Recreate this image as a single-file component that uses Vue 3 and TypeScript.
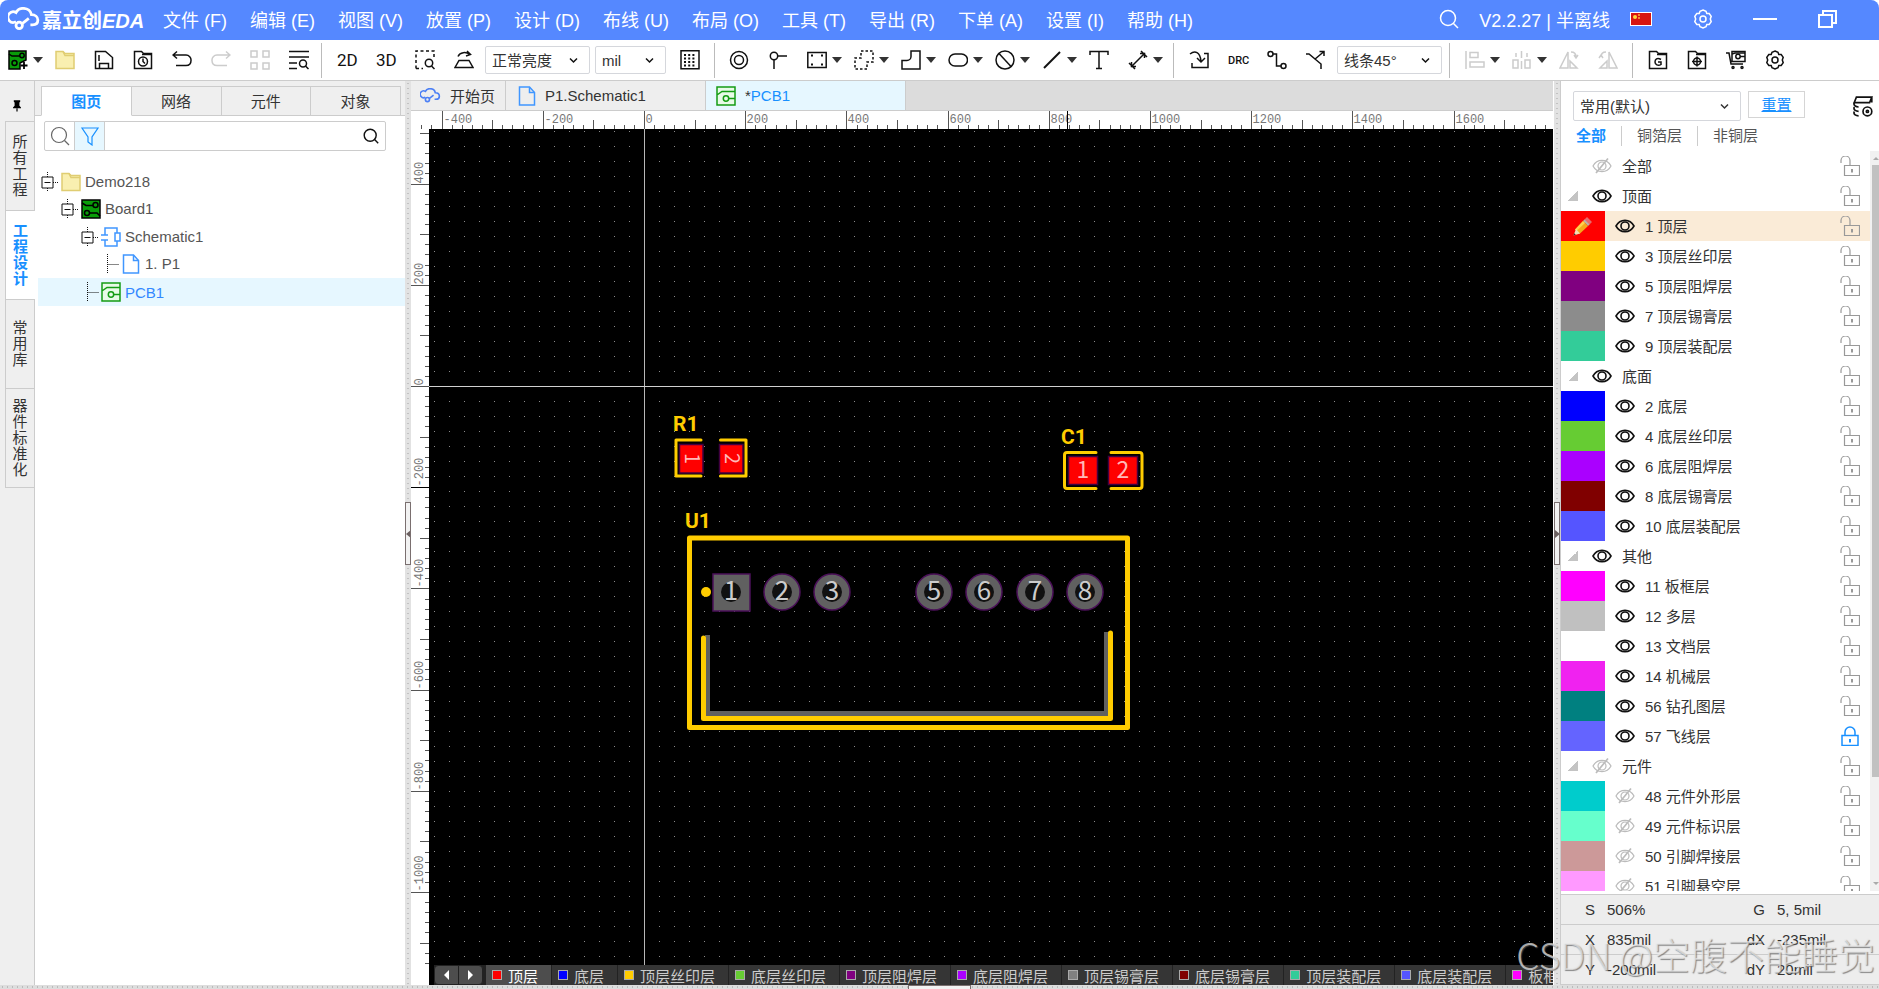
<script setup lang="ts">
import { computed, onBeforeUnmount, onMounted, ref } from 'vue'

interface Tool { icon?: string; label?: string; name: string; caret?: boolean; tight?: boolean; off?: boolean }
interface Row { kind: 'all' | 'group' | 'layer'; name: string; color?: string; hidden?: boolean; locked?: boolean; active?: boolean }

const icons: Record<string, string> = {
  cloud: '<path d="M7.5 13.5a5 5 0 1 1 0-8.600C9 2 11.500 1 14 1c4.500 0 7.500 2.500 8 6 3.500 0 6 2.200 6 5s-2 4.500-5 4.500h-2"/><circle cx="10.500" cy="17" r="3"/><path d="M13 15.500l6.500-5"/>',
  search: '<circle cx="9" cy="9" r="7.500"/><path d="M14.500 14.500l4.500 4.500"/>',
  gear: '<path d="M10 1l3 1.200.8 2.300 2.400.1 2 2.700-.9 2.700.9 2.700-2 2.700-2.400.1-.8 2.300L10 19l-3-1.200-.8-2.300-2.400-.1-2-2.700.9-2.700-.9-2.700 2-2.700 2.400-.1L7 2.200z"/><circle cx="10" cy="10" r="3"/>',
  restore: '<path d="M6 6V2h13v12h-4"/><path d="M2 6h13v12H2z"/>',
  chevron: '<path d="M2 3.500l3.500 3.500L9 3.500"/>',
  board: '<path fill="#099d09" stroke="#000" d="M1 1h17v9l-6 3v6H1z"/><g stroke="#000"><circle cx="14" cy="5.500" r="2.200"/><circle cx="6.500" cy="13" r="2.500"/><path d="M1 4l3 2h8M4 13"/></g><path stroke="#000" stroke-width="1.800" d="M16 12v7M12.500 15.500h7"/>',
  folder: '<path fill="#f9efb0" stroke="#e0cd72" d="M1 18.500V1.500h7l2 2h9v15z"/><path stroke="#e0cd72" d="M8 1.500l2 4h9"/>',
  save: '<path d="M1.500 18.500v-17h10l7 6v11z"/><path d="M5 5v6M5.500 18v-4.500h9V18"/>',
  history: '<path d="M1.500 18.500v-17h7l2 2h8v15z"/><path d="M9 4.500h9.500"/><circle cx="10" cy="11.500" r="4.500"/><path d="M10 8.500v3l2 2"/>',
  undo: '<path d="M5 1.500L1 5l4 3.500M1 5h13a5 5 0 0 1 5 5.500c0 3-2 5-5 5H4"/>',
  redo: '<path d="M15 1.500L19 5l-4 3.500M19 5H6a5 5 0 0 0-5 5.500c0 3 2 5 5 5h10"/>',
  tiles: '<path d="M1 1h6v6H1zM13 1h6v6h-6zM1 13h6v6H1zM13 13h6v6h-6z"/>',
  listfind: '<path d="M0 1.500h20M0 7h20M0 13h8M0 18.500h8"/><circle cx="14" cy="13.500" r="3.500"/><path d="M16.500 16l3 3"/>',
  areafind: '<path stroke-dasharray="3 2.500" d="M1 18.500V1h18v7M1 18.500h7"/><circle cx="14" cy="13" r="3.700"/><path d="M16.500 16l3 3"/>',
  layer: '<path d="M1 17.500h18l-4-7H5z"/><path d="M4 6.500c2-4.500 8-5 12-2M13 1l3.500 3.500L12 6"/>',
  grid: '<path d="M1 .8h18v18H1z"/><path stroke-width="2" stroke-dasharray="2 2.200" d="M4 5h12.500M4 8.500h12.500M4 12h12.500M4 15.500h12.500"/>',
  target: '<circle cx="10" cy="10" r="8.500"/><circle cx="10" cy="10" r="4.500"/>',
  via: '<circle cx="6" cy="6" r="3.700"/><path d="M9.500 6H19M6 10v9"/>',
  region: '<path d="M.8 2.500h18.400v15H.8z"/><path stroke-width="2" d="M4 5.500h2M14 5.500h2M4 14.500h2M14 14.500h2"/>',
  dashed: '<path stroke-dasharray="2.500 2" d="M7 1h12v11h-6v7H1V8h6z"/>',
  poly: '<path d="M10 1h9v18H1V10.500h5a4 4 0 0 0 4-4z"/>',
  slot: '<rect x="1" y="4" width="18.500" height="12" rx="6"/>',
  forbid: '<circle cx="10" cy="10" r="9"/><path d="M4 3.500l12 13"/>',
  line: '<path stroke-width="2" d="M2 18L18 2"/>',
  text: '<path d="M1 5V1.500h18V5M10 1.500v17M7 18.500h6"/>',
  dim: '<path d="M3 17L17 3M1 13l6 6M13 1l6 6M3.500 12v4.500H8M12 3.500h4.500V8"/>',
  inbox: '<path d="M1 4c5-4 10-2 11 7M8 8l4 4 4-4M15 3.500h4v14H3V13"/>',
  net: '<circle cx="3.500" cy="4" r="2.500"/><circle cx="16.500" cy="16" r="2.500"/><path d="M6 4h3.500v12H14"/>',
  split: '<path d="M0 4h3l12 10v5M8.500 9.500L18 1.500M13.500 1.500H18V6"/>',
  align: '<path d="M1 1v18M5 2.500h8v5H5zM5 12h14v5H5z"/>',
  spread: '<path d="M1 10h5v8H1zM13 10h5v8h-5zM4 3v4M9.500 1v7M9.500 11v8M15 3v4"/>',
  flipl: '<path d="M9 2v16H1zM11 11l7 7h-7zM12 2c3 0 5 2 5 5M15 5l2 3 2-3"/>',
  flipr: '<path d="M11 2v16h8zM9 11l-7 7h7zM8 2C5 2 3 4 3 7M1 8l2-3 2 3"/>',
  gfold: '<path d="M1.500 18.500v-17h7l2 2h8v15z"/><path d="M9 4.500h9.500M13 9.500C9 7 7 9.500 7 12s3 4.500 6 2.500v-2.500h-3"/>',
  afold: '<path d="M1.500 18.500v-17h7l2 2h8v15z"/><path d="M9 4.500h9.500"/><circle cx="10" cy="11.500" r="3.500"/><path d="M10 6.500v10M5 11.500h10"/>',
  cart: '<path d="M0 3h3l2 11h12M6 1.500h13v10H6z"/><circle cx="12" cy="6.500" r="2.200"/><path d="M14 6.500h5M6 4l3-1h10"/><circle cx="7" cy="17.500" r="1"/><circle cx="16" cy="17.500" r="1"/>',
  pin: '<path fill="#000" stroke="none" d="M6 4h8v2l-1 1v4l2 2v1H5v-1l2-2V7L6 6z"/><path stroke="#000" d="M10 14v4"/>',
  filter: '<path d="M2 2h16l-6 9v8l-4-3v-5z"/>',
  page: '<path d="M2.500 1h10l5 5.500v12.500h-15z"/><path d="M12.500 1v5.500h5"/>',
  pcb: '<path fill="#e8fbe8" d="M1 1h18v18H1zM1 9l5-3.500h13"/><circle cx="10" cy="12.500" r="2.700"/><path d="M12.700 12.500H19"/>',
  bcard: '<path fill="#099d09" stroke="#000" d="M1 1h18v18H1z"/><g stroke="#000"><circle cx="14.500" cy="6" r="2.500"/><circle cx="6" cy="14" r="2.500"/><path d="M1 4l4 2.500h7M8.500 14H16l3 3"/></g>',
  schem: '<path d="M4 6V1h12v5M4 14v5h12v-5M0 8h7M0 13h7M4 6v2M4 13v2"/><path d="M14 6h5v8h-5z"/>',
  layers: '<path d="M4 1h14l-2 5H2zM2 6c-1 3 2 4 4 4M2 10c-1 3 2 4 4 4M2 14c-1 3 2 4 4 4M18 1v5"/><circle cx="14" cy="14" r="4"/><circle cx="14" cy="14" r="1"/>',
  eye: '<path d="M1 10c4-7.500 14-7.500 18 0-4 7.500-14 7.500-18 0z"/><circle cx="10" cy="10" r="4"/>',
  eyeoff: '<path d="M1 10c4-7.500 14-7.500 18 0-4 7.500-14 7.500-18 0z"/><circle cx="10" cy="10" r="4"/><path stroke-width="1.700" d="M4 17L16 2.500"/>',
  unlock: '<path d="M1 7V4.500a4.500 4.500 0 0 1 9 0V9M4.500 9.500h15v10h-15z"/><path stroke-width="2" d="M12 13v3.500"/>',
  lock: '<path d="M5 9V6a5 5 0 0 1 10 0v3M2 9.500h16v10H2z"/><path stroke-width="2" d="M10 13v3.500"/>',
  pencil: '<g stroke="none"><path fill="#e86a6a" d="M14 1l5 5-3 3-5-5z"/><path fill="#b9b2a8" d="M11.500 3.500l5 5-1.500 1.500-5-5z"/><path fill="#f5a81c" d="M10 5l5 5-8.500 8L2 13.500z"/><path fill="#ffd14d" d="M10 5l2 2-8.500 8L2 13.500z"/><path fill="#f3dcb4" d="M3 13l4 4.500L.5 19.500z"/><path fill="#333" d="M1.300 17.300l1.500 1.500-2.300.7z"/></g>',
}

const menus = ['文件 (F)', '编辑 (E)', '视图 (V)', '放置 (P)', '设计 (D)', '布线 (U)', '布局 (O)', '工具 (T)', '导出 (R)', '下单 (A)', '设置 (I)', '帮助 (H)']

const fileTools: Tool[] = [
  { icon: 'board', name: '新建', caret: true },
  { icon: 'folder', name: '打开' },
  { icon: 'save', name: '保存' },
  { icon: 'history', name: '历史' },
  { icon: 'undo', name: '撤销' },
  { icon: 'redo', name: '重做', off: true },
  { icon: 'tiles', name: '阵列', off: true },
  { icon: 'listfind', name: '查找' },
]
const viewTools: Tool[] = [
  { label: '2D', name: '2D' },
  { label: '3D', name: '3D' },
  { icon: 'areafind', name: '框选缩放' },
  { icon: 'layer', name: '翻转', tight: true },
]
const placeTools: Tool[] = [
  { icon: 'target', name: '焊盘' },
  { icon: 'via', name: '过孔' },
  { icon: 'region', name: '板框', caret: true },
  { icon: 'dashed', name: '铺铜', caret: true },
  { icon: 'poly', name: '填充', caret: true },
  { icon: 'slot', name: '挖槽', caret: true },
  { icon: 'forbid', name: '禁止区域', caret: true },
  { icon: 'line', name: '线条', caret: true },
  { icon: 'text', name: '文本' },
  { icon: 'dim', name: '尺寸', caret: true },
]
const routeTools: Tool[] = [
  { icon: 'inbox', name: '导入变更' },
  { label: 'DRC', name: 'DRC' },
  { icon: 'net', name: '布线' },
  { icon: 'split', name: '差分布线', tight: true },
]
const alignTools: Tool[] = [
  { icon: 'align', name: '对齐', caret: true, off: true },
  { icon: 'spread', name: '分布', caret: true, off: true },
  { icon: 'flipl', name: '左旋', off: true },
  { icon: 'flipr', name: '右旋', off: true },
]
const outTools: Tool[] = [
  { icon: 'gfold', name: 'Gerber' },
  { icon: 'afold', name: '坐标文件' },
  { icon: 'cart', name: '下单' },
  { icon: 'gear', name: '设置' },
]

const sideTabs = [
  { name: '所有工程', size: 'm' },
  { name: '工程设计', size: 'm', on: true },
  { name: '常用库', size: 'm' },
  { name: '器件标准化', size: 'l' },
]
const panelTabs = ['图页', '网络', '元件', '对象']
const keyword = ref('')

const tree = [
  { depth: 0, icon: 'folder', name: 'Demo218', box: true },
  { depth: 1, icon: 'bcard', name: 'Board1', box: true },
  { depth: 2, icon: 'schem', name: 'Schematic1', box: true, tone: 'blue' },
  { depth: 3, icon: 'page', name: '1. P1', box: false, tone: 'blue' },
  { depth: 2, icon: 'pcb', name: 'PCB1', box: false, tone: 'green', on: true },
]

const rows: Row[] = [
  { kind: 'all', name: '全部', hidden: true },
  { kind: 'group', name: '顶面' },
  { kind: 'layer', name: '1 顶层', color: '#ff0000', active: true },
  { kind: 'layer', name: '3 顶层丝印层', color: '#ffcc00' },
  { kind: 'layer', name: '5 顶层阻焊层', color: '#800080' },
  { kind: 'layer', name: '7 顶层锡膏层', color: '#8c8c8c' },
  { kind: 'layer', name: '9 顶层装配层', color: '#33cc99' },
  { kind: 'group', name: '底面' },
  { kind: 'layer', name: '2 底层', color: '#0000ff' },
  { kind: 'layer', name: '4 底层丝印层', color: '#66cc33' },
  { kind: 'layer', name: '6 底层阻焊层', color: '#aa00ff' },
  { kind: 'layer', name: '8 底层锡膏层', color: '#800000' },
  { kind: 'layer', name: '10 底层装配层', color: '#5555ff' },
  { kind: 'group', name: '其他' },
  { kind: 'layer', name: '11 板框层', color: '#ff00ff' },
  { kind: 'layer', name: '12 多层', color: '#c0c0c0' },
  { kind: 'layer', name: '13 文档层', color: '#ffffff' },
  { kind: 'layer', name: '14 机械层', color: '#f022f0' },
  { kind: 'layer', name: '56 钻孔图层', color: '#008080' },
  { kind: 'layer', name: '57 飞线层', color: '#6464ff', locked: true },
  { kind: 'group', name: '元件', hidden: true },
  { kind: 'layer', name: '48 元件外形层', color: '#00cccc', hidden: true },
  { kind: 'layer', name: '49 元件标识层', color: '#66ffcc', hidden: true },
  { kind: 'layer', name: '50 引脚焊接层', color: '#cc9999', hidden: true },
  { kind: 'layer', name: '51 引脚悬空层', color: '#ff99ff', hidden: true },
]

const bottomTabs = [
  { name: '顶层', color: '#ff0000', on: true },
  { name: '底层', color: '#0000ff' },
  { name: '顶层丝印层', color: '#ffcc00' },
  { name: '底层丝印层', color: '#66cc33' },
  { name: '顶层阻焊层', color: '#800080' },
  { name: '底层阻焊层', color: '#aa00ff' },
  { name: '顶层锡膏层', color: '#808080' },
  { name: '底层锡膏层', color: '#800000' },
  { name: '顶层装配层', color: '#33cc99' },
  { name: '底层装配层', color: '#5555ff' },
  { name: '板框层', color: '#ff00ff' },
]

const PX_PER_MIL = 0.506
const originX = 233
const originY = 257

// Rulers only carry the ticks that fit the visible canvas.
const center = ref<HTMLElement | null>(null)
const viewW = ref(0)
const viewH = ref(0)
let watcher: ResizeObserver | undefined
function measure() {
  if (!center.value) return
  viewW.value = center.value.clientWidth
  viewH.value = center.value.clientHeight - 48
}
onMounted(() => {
  measure()
  watcher = new ResizeObserver(measure)
  if (center.value) watcher.observe(center.value)
})
onBeforeUnmount(() => watcher?.disconnect())

interface Tick { pos: number; len: number; label?: string }
function ticks(origin: number, sign: number, size: number): Tick[] {
  const out: Tick[] = []
  for (let v = -4000; v <= 4000; v += 20) {
    const pos = Math.round(origin + sign * v * PX_PER_MIL) + 0.5
    if (pos < 2 || pos > size) continue
    const len = v % 200 === 0 ? 18 : v % 100 === 0 ? 9 : 4
    out.push({ pos, len, label: v % 200 === 0 ? String(v) : undefined })
  }
  return out
}
const xTicks = computed(() => ticks(originX, 1, viewW.value))
const yTicks = computed(() => ticks(originY, -1, viewH.value - 14))

const roundPads = [
  { x: 353, n: '2' }, { x: 403, n: '3' }, { x: 505, n: '5' },
  { x: 555, n: '6' }, { x: 606, n: '7' }, { x: 656, n: '8' },
]
</script>

<template>
  <div class="app">
    <header class="titlebar">
      <div class="brand">
        <svg class="cloud" viewBox="0 0 30 22" v-html="icons.cloud"></svg>
        <span>嘉立创<i>EDA</i></span>
      </div>
      <nav class="menus">
        <button v-for="m in menus" :key="m" type="button">{{ m }}</button>
      </nav>
      <div class="winbar">
        <button type="button" aria-label="搜索"><svg class="ic" viewBox="0 0 20 20" v-html="icons.search"></svg></button>
        <span class="version">V2.2.27 | 半离线</span>
        <svg class="flag" viewBox="0 0 22 14"><rect width="22" height="14" fill="#fff" /><rect x="1" y="1" width="20" height="12" fill="#d8160f" /><circle cx="5" cy="5" r="2" fill="#ffd83b" /><path d="M8 3h2M8 6h2" stroke="#ffb43b" /></svg>
        <button type="button" class="b-gear" aria-label="设置"><svg class="ic" viewBox="0 0 20 20" v-html="icons.gear"></svg></button>
        <button type="button" class="b-min" aria-label="最小化"><svg viewBox="0 0 24 20"><path d="M0 10h24" /></svg></button>
        <button type="button" class="b-max" aria-label="还原"><svg class="ic" viewBox="0 0 20 20" v-html="icons.restore"></svg></button>
      </div>
    </header>

    <div class="toolbar">
      <div class="group g-file">
        <button v-for="t in fileTools" :key="t.name" type="button" class="tool" :class="{ wide: t.caret, off: t.off }" :aria-label="t.name">
          <svg class="ic" viewBox="0 0 20 20" v-html="icons[t.icon!]"></svg><i v-if="t.caret" class="caret"></i>
        </button>
      </div>
      <div class="group g-view">
        <button v-for="t in viewTools" :key="t.name" type="button" class="tool" :class="{ tight: t.tight }" :aria-label="t.name">
          <b v-if="t.label" class="dim">{{ t.label }}</b><svg v-else class="ic" viewBox="0 0 20 20" v-html="icons[t.icon!]"></svg>
        </button>
        <span class="pick w-bright"><select aria-label="亮度"><option>正常亮度</option></select><svg viewBox="0 0 11 11" v-html="icons.chevron"></svg></span>
        <span class="pick w-unit"><select aria-label="单位"><option>mil</option></select><svg viewBox="0 0 11 11" v-html="icons.chevron"></svg></span>
        <button type="button" class="tool" aria-label="网格"><svg class="ic" viewBox="0 0 20 20" v-html="icons.grid"></svg></button>
      </div>
      <div class="group g-place">
        <button v-for="t in placeTools" :key="t.name" type="button" class="tool" :class="{ wide: t.caret }" :aria-label="t.name">
          <svg class="ic" viewBox="0 0 20 20" v-html="icons[t.icon!]"></svg><i v-if="t.caret" class="caret"></i>
        </button>
      </div>
      <div class="group g-route">
        <button v-for="t in routeTools" :key="t.name" type="button" class="tool" :class="{ tight: t.tight }" :aria-label="t.name">
          <b v-if="t.label" class="drc">{{ t.label }}</b><svg v-else class="ic" viewBox="0 0 20 20" v-html="icons[t.icon!]"></svg>
        </button>
        <span class="pick w-bright"><select aria-label="布线拐角"><option>线条45°</option></select><svg viewBox="0 0 11 11" v-html="icons.chevron"></svg></span>
      </div>
      <div class="group g-align">
        <button v-for="t in alignTools" :key="t.name" type="button" class="tool" :class="{ wide: t.caret, off: t.off }" :aria-label="t.name">
          <svg class="ic" viewBox="0 0 20 20" v-html="icons[t.icon!]"></svg><i v-if="t.caret" class="caret"></i>
        </button>
      </div>
      <div class="group g-out">
        <button v-for="t in outTools" :key="t.name" type="button" class="tool" :aria-label="t.name">
          <svg class="ic" viewBox="0 0 20 20" v-html="icons[t.icon!]"></svg>
        </button>
      </div>
    </div>

    <main class="work">
      <aside class="side">
        <button type="button" class="pin" aria-label="固定"><svg viewBox="0 0 20 20" v-html="icons.pin"></svg></button>
        <button v-for="s in sideTabs" :key="s.name" type="button" class="vtab" :class="[s.size, { on: s.on }]"><span>{{ s.name }}</span></button>
      </aside>

      <section class="panel">
        <div class="ptabs">
          <button v-for="(t, i) in panelTabs" :key="t" type="button" :class="{ on: i === 0 }">{{ t }}</button>
        </div>
        <div class="finder">
          <button type="button" aria-label="搜索范围"><svg class="ic" viewBox="0 0 20 20" v-html="icons.search"></svg></button>
          <button type="button" class="filter" aria-label="筛选"><svg class="ic" viewBox="0 0 20 20" v-html="icons.filter"></svg></button>
          <input v-model="keyword" type="text" aria-label="关键字" />
          <button type="button" class="go" aria-label="查找"><svg class="ic" viewBox="0 0 20 20" v-html="icons.search"></svg></button>
        </div>
        <ul class="tree">
          <li v-for="n in tree" :key="n.name" :class="['d' + n.depth, n.tone, { on: n.on }]">
            <svg v-if="n.box" class="knot" viewBox="0 0 18 20"><path class="dots" d="M6.500 0v20M12 10.500h6" /><path d="M1 5h11v11H1zM3.500 10.500h6" fill="#fff" /></svg>
            <svg v-else class="knot" viewBox="0 0 18 20"><path class="dots" d="M6.500 0v20M6.500 10.500H18" /></svg>
            <svg class="ic" viewBox="0 0 20 20" v-html="icons[n.icon]"></svg>
            <span>{{ n.name }}</span>
          </li>
        </ul>
      </section>

      <div class="split"><div class="grip"><svg viewBox="0 0 5 8"><path d="M5 0v8L0 4z" /></svg></div></div>

      <section ref="center" class="center">
        <div class="docs">
          <button type="button" class="doc home"><svg class="cloud" viewBox="0 0 30 22" v-html="icons.cloud"></svg>开始页</button>
          <button type="button" class="doc sch"><svg class="ic" viewBox="0 0 20 20" v-html="icons.page"></svg>P1.Schematic1</button>
          <button type="button" class="doc pcb on"><svg class="ic" viewBox="0 0 20 20" v-html="icons.pcb"></svg><span><em>*</em>PCB1</span></button>
        </div>
        <svg class="hruler">
          <g v-for="t in xTicks" :key="t.pos">
            <path :d="`M${t.pos} ${18 - t.len}V18`" />
            <text v-if="t.label" :x="t.pos + 1" y="12">{{ t.label }}</text>
          </g>
          <path class="cur" d="M656.500 0v18" />
        </svg>
        <div class="stage">
          <svg class="vruler">
            <g v-for="t in yTicks" :key="t.pos">
              <path :d="`M${18 - t.len} ${t.pos}H18`" />
              <text v-if="t.label" :transform="`translate(12 ${t.pos - 1}) rotate(-90)`">{{ t.label }}</text>
            </g>
            <path class="cur" d="M0 358.500h18" />
          </svg>
          <div class="board">
            <svg class="canvas">
              <defs>
                <pattern id="dots" x="5" y="2" width="15" height="15" patternUnits="userSpaceOnUse"><rect width="1" height="1" fill="#8a8a8a" /></pattern>
              </defs>
              <rect width="100%" height="100%" fill="#000" />
              <rect width="100%" height="100%" fill="url(#dots)" />
              <rect x="215" y="0" width="1" height="100%" fill="#b8b8b8" />
              <rect x="0" y="257" width="100%" height="1" fill="#d0d0d0" />

              <g class="silk" stroke-width="3">
                <path d="M272 311H247v36h25M291.500 311H317v36h-25.500" />
                <path d="M667 323.500h-29q-2.500 0-2.500 2.500v31q0 2.500 2.500 2.500H667M682 323.500h28.500q2.500 0 2.500 2.500v31q0 2.500-2.500 2.500H682" />
              </g>
              <g fill="#f00" stroke="#400040">
                <path d="M250.500 315.500h23.500v28.500h-23.500zM290.500 315.500h23.500v28.500h-23.500zM639.500 327.500h29v28h-29zM679.500 327.500h29v28h-29z" />
              </g>
              <g class="num pink">
                <text transform="translate(256 329.500) rotate(90)" font-size="20">1</text>
                <text transform="translate(296 329.500) rotate(90)" font-size="20">2</text>
                <text x="654" y="349" font-size="23">1</text>
                <text x="694" y="349" font-size="23">2</text>
              </g>
              <g class="ref">
                <text x="244" y="302">R1</text>
                <text x="632" y="315">C1</text>
                <text x="256" y="399">U1</text>
              </g>
              <path fill="none" stroke="#606060" stroke-width="5" d="M278.500 506v78.500h399V503" />
              <g class="silk" stroke-width="5">
                <path d="M260.500 409h438v189.500h-438z" />
                <path d="M274.500 509v80.500h407V504" />
              </g>
              <circle cx="277" cy="463" r="5" fill="#fc0" />
              <rect x="284" y="445" width="37" height="37" fill="#606060" stroke="#4b1059" />
              <circle cx="302" cy="463" r="10" fill="#111" />
              <g v-for="p in roundPads" :key="p.n">
                <circle :cx="p.x" cy="463" r="18" fill="#606060" stroke="#4b1059" />
                <circle :cx="p.x" cy="463" r="10" fill="#111" />
              </g>
              <g class="num" font-size="26">
                <text x="302" y="471">1</text>
                <text v-for="p in roundPads" :key="p.n" :x="p.x" y="471">{{ p.n }}</text>
              </g>
            </svg>
            <div class="ltabs">
              <div class="nav">
                <button type="button" aria-label="向左"><svg viewBox="0 0 5 10"><path d="M5 0v10L0 5z" /></svg></button>
                <button type="button" aria-label="向右"><svg viewBox="0 0 5 10"><path d="M0 0v10l5-5z" /></svg></button>
              </div>
              <button v-for="b in bottomTabs" :key="b.name" type="button" class="ltab" :class="{ on: b.on }"><i :style="{ background: b.color }"></i>{{ b.name }}</button>
            </div>
          </div>
        </div>
      </section>

      <div class="split right"><div class="grip"><svg viewBox="0 0 5 8"><path d="M0 0v8l5-4z" /></svg></div></div>

      <aside class="layers">
        <div class="lhead">
          <span class="pick w-preset"><select aria-label="图层方案"><option>常用(默认)</option></select><svg viewBox="0 0 11 11" v-html="icons.chevron"></svg></span>
          <button type="button" class="reset">重置</button>
          <button type="button" class="cfg" aria-label="图层设置"><svg class="ic" viewBox="0 0 20 20" v-html="icons.layers"></svg></button>
        </div>
        <div class="lfilter">
          <button type="button" class="on">全部</button>
          <button type="button">铜箔层</button>
          <button type="button">非铜层</button>
        </div>
        <div class="lbody">
          <ul>
            <li v-for="r in rows" :key="r.name + r.kind" :class="[r.kind, { active: r.active, hid: r.hidden, locked: r.locked }]">
              <i v-if="r.kind === 'layer'" class="sw" :style="{ background: r.color }"><svg v-if="r.active" viewBox="0 0 20 20" v-html="icons.pencil"></svg></i>
              <i v-else class="tri"></i>
              <svg class="eye" viewBox="0 0 20 20" v-html="r.hidden ? icons.eyeoff : icons.eye"></svg>
              <span>{{ r.name }}</span>
              <svg class="lk" viewBox="0 0 20 20" v-html="r.locked ? icons.lock : icons.unlock"></svg>
            </li>
          </ul>
          <div class="bar"><i class="up"></i><div class="thumb"></div><i class="down"></i></div>
        </div>
        <dl class="status">
          <div><dt>S</dt><dd>506%</dd><dt class="r">G</dt><dd>5, 5mil</dd></div>
          <div><dt>X</dt><dd>835mil</dd><dt class="r">dX</dt><dd>-235mil</dd></div>
          <div><dt>Y</dt><dd>-200mil</dd><dt class="r">dY</dt><dd>20mil</dd></div>
        </dl>
      </aside>
    </main>
    <div class="foot"><div class="hgrip"></div></div>
    <div class="mark">CSDN @空腹不能睡觉</div>
  </div>
</template>

<style>
body { background: #fff; }
</style>

<style scoped>
* { box-sizing: border-box; }
.app {
  position: relative; height: 100vh; display: flex; flex-direction: column; overflow: hidden;
  font-family: "Liberation Sans", "Noto Sans CJK SC", sans-serif; font-size: 15px; color: #333; background: #fff;
}
button { font: inherit; color: inherit; background: none; border: 0; padding: 0; margin: 0; white-space: nowrap; }
svg { display: block; flex: none; fill: none; stroke: currentColor; stroke-width: 1.5; }
.ic { width: 20px; height: 20px; }
i { font-style: normal; }

.titlebar { height: 40px; flex: none; display: flex; align-items: center; background: #5588ff; color: #fff; border-radius: 8px 8px 0 0; padding: 0 42px 2px 8px; }
.brand { display: flex; align-items: center; gap: 2px; width: 155px; font-size: 20px; font-weight: 700; white-space: nowrap; }
.brand .cloud { width: 32px; height: 24px; stroke-width: 2.6; }
.brand i { font-style: italic; }
.menus { display: flex; gap: 23px; font-size: 18px; flex: 1; }
.winbar { display: flex; align-items: center; font-size: 18px; }
.version { margin: 0 20px; white-space: nowrap; }
.flag { width: 22px; height: 14px; stroke: none; }
.b-gear { margin-left: 41px; }
.b-min { margin: 0 40px; }
.b-min svg { width: 24px; height: 20px; stroke-width: 2; }
.b-max svg { stroke-width: 2; }

.toolbar { height: 41px; flex: none; display: flex; align-items: center; border-bottom: 1px solid #ccc; color: #111; overflow: hidden; }
.group { height: 35px; display: flex; align-items: center; border-left: 1px solid #bbb; padding: 0 14px 0 15px; flex: none; }
.g-file { border-left: 0; padding: 0 12px 0 8px; }
.g-place { padding: 0 10px 0 14px; }
.g-route { padding-right: 7px; }
.tool { width: 39px; display: flex; align-items: center; flex: none; }
.tool.wide { width: 47px; }
.tool.tight { width: 31px; }
.tool:last-child { width: auto; }
.tool.off .ic { color: #ccc; }
.caret { border: 5px solid transparent; border-top: 6px solid #333; border-bottom: 0; margin-left: 5px; }
.dim { font: 400 17px Roboto, sans-serif; }
.drc { font: 500 11px Roboto, sans-serif; }
.pick { position: relative; display: inline-flex; height: 28px; flex: none; }
.pick select { appearance: none; width: 100%; height: 100%; font: inherit; color: #333; background: #fff; border: 1px solid #d5d7dc; border-radius: 2px; padding: 0 6px; }
.pick svg { position: absolute; right: 11px; top: 50%; margin-top: -5px; width: 11px; height: 11px; pointer-events: none; }
.w-bright { width: 105px; }
.w-unit { width: 71px; margin: 0 14px 0 5px; }

.work { flex: 1; min-height: 0; display: flex; }
.side { width: 35px; flex: none; background: #efefef; border-right: 1px solid #ccc; padding-left: 5px; display: flex; flex-direction: column; }
.pin { height: 40px; padding: 8px 0 0 4px; }
.pin svg { width: 16px; height: 16px; }
.vtab { border: 1px solid #ccc; border-width: 1px 0 0 1px; height: 89px; display: flex; justify-content: center; align-items: center; }
.vtab.l { height: 100px; border-bottom-width: 1px; }
.vtab span { width: 15px; white-space: normal; line-height: 16px; word-break: break-all; }
.vtab.on { background: #fff; color: #1890ff; font-weight: 700; margin-right: -1px; }
.panel { width: 370px; flex: none; display: flex; flex-direction: column; }
.ptabs { display: flex; padding: 5px 4px 0 6px; background: linear-gradient(#ccc, #ccc) bottom / 100% 1px no-repeat #efefef; }
.ptabs button { flex: 1; height: 30px; border: 1px solid #ccc; border-left: 0; padding-bottom: 2px; }
.ptabs .on { background: #fff; color: #1890ff; font-weight: 700; border-left: 1px solid #ccc; border-bottom-color: #fff; }
.finder { display: flex; align-items: center; height: 30px; margin: 5px 19px 0 9px; border: 1px solid #ccc; border-radius: 2px; color: #666; }
.finder button { width: 29px; height: 28px; display: flex; align-items: center; justify-content: center; }
.finder .ic { stroke-width: 1.2; }
.finder .filter { width: 31px; background: #e6f7ff; color: #1890ff; border-left: 1px solid #ccc; border-right: 1px solid #ccc; }
.finder input { flex: 1; min-width: 0; height: 26px; border: 0; outline: 0; padding: 0 8px; font: inherit; }
.finder .go { color: #111; }
.finder .go .ic { width: 16px; height: 16px; stroke-width: 1.8; }
.tree { list-style: none; margin: 17px 0 0; padding: 0 0 0 3px; }
.tree li { height: 27px; margin-bottom: 1px; display: flex; align-items: center; color: #555; }
.tree li.d0, .tree li.d2 { margin-bottom: 0; }
.tree .on { height: 28px; background: #e6f7ff; }
.tree .on span { color: #3388ff; }
.tree .d0 { padding-left: 3px; }
.tree .d1 { padding-left: 23px; }
.tree .d2 { padding-left: 43px; }
.tree .d3 { padding-left: 63px; }
.knot { width: 18px; height: 20px; margin-right: 2px; stroke: #111; stroke-width: 1; }
.dots { stroke-dasharray: 1 1; }
.tree .ic { margin-right: 4px; }
.tree .blue .ic { color: #4096ff; }
.tree .green .ic { color: #149c14; }

.split { width: 6px; flex: none; display: flex; align-items: flex-start; background: radial-gradient(circle, #c2c2c2 1px, transparent 1px) 0 0 / 6px 5px #e2e2e2; }
.split.right { border-left: 1px solid #fff; width: 7px; }
.grip { width: 6px; height: 63px; margin-top: 421px; flex: none; background: #f2f2f2; border: 1px solid #7a6f6f; display: flex; align-items: center; overflow: hidden; }
.grip svg { width: 5px; height: 8px; fill: #6b6060; stroke: none; }

.center { flex: 1; min-width: 0; display: flex; flex-direction: column; }
.docs { height: 30px; flex: none; display: flex; background: #dcdcdc; border-bottom: 1px solid #ccc; }
.doc { display: flex; align-items: center; background: #eee; border-right: 1px solid #ccc; }
.doc .cloud { width: 21px; height: 15px; color: #4d80f5; stroke-width: 2.4; margin-right: 9px; }
.home { width: 95px; padding-left: 9px; }
.sch { width: 200px; padding-left: 11px; }
.sch .ic { color: #4096ff; margin-right: 8px; }
.doc.pcb { width: 200px; padding-left: 10px; background: #e6f7ff; color: #1890ff; }
.pcb .ic { color: #149c14; margin-right: 9px; }
.pcb em { font-style: normal; color: #333; }
.hruler, .vruler { stroke: #555; stroke-width: 1; font: 12px "Liberation Mono", monospace; overflow: hidden; background: #fff; }
.hruler text, .vruler text { fill: #777; stroke: none; }
.hruler .cur, .vruler .cur { stroke: #000; }
.hruler { width: 100%; height: 18px; }
.stage { flex: 1; min-height: 0; display: flex; }
.vruler { width: 18px; height: 100%; }
.board { flex: 1; min-width: 0; display: flex; flex-direction: column; background: #000; }
.canvas { flex: 1; min-height: 0; width: 100%; stroke: none; overflow: hidden; }
.silk { fill: none; stroke: #fc0; stroke-linecap: round; stroke-linejoin: round; }
.num { fill: #ccc; text-anchor: middle; font-family: "Noto Sans CJK SC", sans-serif; }
.pink { fill: #ffb8b8; }
.ref { fill: #fc0; font: 700 21px Roboto, sans-serif; }
.ltabs { height: 20px; flex: none; display: flex; margin-left: 5px; background: #222; overflow: hidden; }
.nav { width: 49px; flex: none; display: flex; margin-right: 3px; background: #4d4d4d; border: 1px solid #222; border-radius: 4px; }
.nav button { flex: 1; display: flex; align-items: center; justify-content: center; }
.nav button + button { border-left: 1px solid #222; }
.nav svg { width: 5px; height: 10px; fill: #fff; stroke: none; }
.ltab { flex: none; display: flex; align-items: center; padding: 0 13px 0 6px; margin-right: 1px; background: #353535; color: #ccc; }
.ltab.on { background: #4d4d4d; color: #fff; }
.ltab i { width: 10px; height: 10px; border: 1px solid #aaa; margin-right: 6px; }

.layers { width: 319px; flex: none; border-left: 1px solid #ccc; display: flex; flex-direction: column; background: #fff; }
.lhead { display: flex; align-items: flex-start; padding: 10px 5px 0 12px; }
.w-preset { width: 168px; height: 30px; margin-right: 7px; }
.reset { width: 57px; height: 27px; border: 1px solid #d5d5d5; color: #1890ff; text-decoration: underline; padding-bottom: 2px; }
.cfg { margin: 5px 0 0 auto; }
.cfg .ic { width: 22px; height: 22px; color: #111; }
.lfilter { display: flex; height: 30px; padding-top: 5px; }
.lfilter button { height: 20px; line-height: 20px; padding: 0 15px; color: #555; }
.lfilter button + button { border-left: 1px solid #ccc; }
.lfilter .on { color: #1890ff; font-weight: 700; }
.lbody { flex: 1; min-height: 0; display: flex; overflow: hidden; }
.lbody ul { list-style: none; margin: 0; padding: 0; flex: 1; min-width: 0; }
.lbody li { height: 30px; display: flex; align-items: center; padding-right: 10px; white-space: nowrap; }
.lbody .active { background: #faebd7; }
.sw { width: 44px; height: 30px; flex: none; margin-right: 10px; display: flex; align-items: center; justify-content: center; }
.sw svg { width: 20px; height: 20px; }
.tri { width: 31px; flex: none; }
.lbody .group .tri { height: 10px; width: 10px; margin: 0 14px 0 7px; background: linear-gradient(135deg, transparent 50%, #c4c4c4 50%); }
.lbody .group { border: 0; padding-left: 0; }
.eye { width: 20px; height: 20px; margin-right: 10px; color: #111; stroke-width: 1.6; }
.hid .eye { color: #bbb; stroke-width: 1.2; }
.lbody span { flex: 1; padding-bottom: 2px; }
.lk { width: 20px; height: 20px; color: #999; stroke-width: 1.2; }
.locked .lk { color: #1890ff; stroke-width: 1.5; }
.bar { width: 9px; flex: none; background: #f1f1f1; display: flex; flex-direction: column; align-items: flex-end; padding: 6px 0; }
.bar .thumb { width: 7px; height: 84%; margin-top: 5px; background: #c1c1c1; }
.up { border: 3px solid transparent; border-top: 0; border-bottom: 3px solid #aaa; }
.down { border: 3px solid transparent; border-bottom: 0; border-top: 3px solid #aaa; margin-top: auto; }
.status { flex: none; margin: 3px 0 0; border-bottom: 1px solid #ccc; background: #ededed; }
.status div { height: 30px; display: flex; align-items: center; border-top: 1px solid #ccc; padding-left: 24px; }
.status dt { width: 22px; flex: none; }
.status dd { margin: 0; flex: 1; }
.status dt + dd { padding-left: 0; }
.status dt.r { width: 24px; text-align: right; margin-right: 12px; }
.status dd:last-child { flex: 0 0 102px; }

.foot { height: 4px; flex: none; display: flex; background: radial-gradient(circle, #bbb 1px, transparent 1px) 0 0 / 5px 4px #ddd; }
.hgrip { width: 63px; height: 4px; margin: 0 auto; background: #f2f2f2; border: 1px solid #7a6f6f; border-bottom: 0; }
.mark {
  position: absolute; right: 4px; bottom: 9px; font: 300 37px/52px "Noto Sans CJK SC", sans-serif;
  color: rgba(235, 235, 235, .7); text-shadow: 1px 1px 1px rgba(90, 90, 90, .7); white-space: nowrap; pointer-events: none;
}
</style>
